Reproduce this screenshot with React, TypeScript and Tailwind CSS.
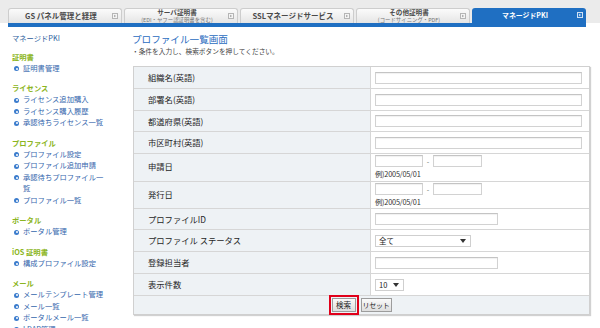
import React from "react";

const FONT = "font-['Noto_Sans_CJK_JP','Noto_Sans',sans-serif]";

type Tab = { l1: string; l2?: string; active?: boolean };
const tabs: Tab[] = [
  { l1: "GS パネル管理と経理" },
  { l1: "サーバ証明書", l2: "(EDI・ヤフー認証明書を含む)" },
  { l1: "SSLマネージドサービス" },
  { l1: "その他証明書", l2: "(コードサイニング・PDF)" },
  { l1: "マネージドPKI", active: true },
];

function TabIcon({ active }: { active?: boolean }) {
  return (
    <span
      className={`absolute right-[3px] top-[4px] flex h-[6px] w-[6px] items-center justify-center border ${
        active ? "border-[#cfe0f4] bg-[#2a78c8]" : "border-[#b5b5b5] bg-[#f4f4f4]"
      }`}
    >
      <svg width="4" height="4" viewBox="0 0 4 4">
        <path d="M1.2 0.8 L3 2 L1.2 3.2 Z" fill={active ? "#e6f0fb" : "#9a9a9a"} />
      </svg>
    </span>
  );
}

type Section = { title: string; items: string[] };
const sections: Section[] = [
  { title: "証明書", items: ["証明書管理"] },
  { title: "ライセンス", items: ["ライセンス追加購入", "ライセンス購入履歴", "承認待ちライセンス一覧"] },
  {
    title: "プロファイル",
    items: ["プロファイル設定", "プロファイル追加申請", "承認待ちプロファイル一覧", "プロファイル一覧"],
  },
  { title: "ポータル", items: ["ポータル管理"] },
  { title: "iOS 証明書", items: ["構成プロファイル設定"] },
  { title: "メール", items: ["メールテンプレート管理", "メール一覧", "ポータルメール一覧", "LDAP管理"] },
];

function Bullet() {
  return (
    <span className="mt-[3.5px] flex h-[5px] w-[5px] shrink-0 items-center justify-center rounded-full bg-[#3b7ccd]">
      <span className="h-[2px] w-[2px] rounded-full bg-white" />
    </span>
  );
}

function TextBox({ w }: { w: string }) {
  return (
    <div
      className={`${w} h-[12px] border border-[#d2d2d2] border-t-[#c4c4c4] bg-white shadow-[inset_0_1px_1px_rgba(0,0,0,0.06)]`}
    />
  );
}

function SelectBox({ w, value }: { w: string; value: string }) {
  return (
    <div
      className={`${w} flex h-[12px] items-center justify-between border border-[#cfcfcf] bg-white pl-[3px] pr-[4px] text-[7.5px] leading-none text-[#222]`}
    >
      <span>{value}</span>
      <svg width="6" height="4" viewBox="0 0 6 4">
        <path d="M0 0 L6 0 L3 4 Z" fill="#333" />
      </svg>
    </div>
  );
}

function Row({
  label,
  h,
  children,
  labelTop,
}: {
  label: string;
  h: string;
  children: React.ReactNode;
  labelTop?: boolean;
}) {
  return (
    <div className={`flex ${h} border-b border-[#d6d6d6]`}>
      <div
        className={`flex w-[237px] shrink-0 border-r border-[#d6d6d6] bg-[#eef2f5] pl-[14px] text-[8.3px] text-[#1e1e1e] ${
          labelTop ? "items-start pt-[6px]" : "items-center"
        }`}
      >
        {label}
      </div>
      <div className={`flex flex-1 flex-col bg-white pl-[4px] ${labelTop ? "justify-start pt-[1px]" : "justify-center"}`}>
        {children}
      </div>
    </div>
  );
}

function DateRange() {
  return (
    <div className="flex flex-col">
      <div className="flex items-center">
        <TextBox w="w-[48px]" />
        <span className="w-[10px] text-center text-[7px] leading-none text-[#666]">-</span>
        <TextBox w="w-[49px]" />
      </div>
      <div className="mt-[2px] text-[7.3px] leading-[10px] tracking-[-0.2px] text-[#333]">例)2005/05/01</div>
    </div>
  );
}

export default function App() {
  return (
    <div className={`h-[328px] w-[600px] overflow-hidden bg-white ${FONT}`}>
      {/* header tabs */}
      <div className="h-[23px] bg-[#ebebeb] pt-[8px]">
        <div className="flex gap-[2px] pl-[8px]">
          {tabs.map((t) =>
            t.active ? (
              <div
                key={t.l1}
                className="relative flex h-[15px] w-[114px] items-center justify-center rounded-t-[3px] bg-[#1f6fc2] pr-[8px] text-[6.9px] font-bold text-white"
              >
                {t.l1}
                <TabIcon active />
              </div>
            ) : (
              <div
                key={t.l1}
                className="relative flex h-[15px] w-[114px] flex-col items-center justify-center overflow-hidden rounded-t-[3px] border border-b-0 border-[#cdcdcd] bg-gradient-to-b from-[#fbfbfb] to-[#e5e5e5] pr-[8px] font-bold leading-none text-[#4a4a4a]"
              >
                {t.l2 ? (
                  <>
                    <span className="block h-[7.5px] whitespace-nowrap text-[6.6px] leading-[7.5px]">{t.l1}</span>
                    <span className="block h-[6.5px] whitespace-nowrap text-[5.4px] font-normal leading-[6.5px] text-[#777]">
                      {t.l2}
                    </span>
                  </>
                ) : (
                  <span className="whitespace-nowrap text-[7.5px]">{t.l1}</span>
                )}
                <TabIcon />
              </div>
            )
          )}
        </div>
      </div>
      <div className="ml-[8px] h-[4px] w-[578px] bg-[#1f6fc2]" />

      <div className="flex">
        {/* sidebar */}
        <div className="w-[125px] shrink-0 pl-[12px] pt-[6px] text-[7.3px]">
          <div className="leading-[11.5px] text-[#2d5d9c]">マネージドPKI</div>
          {sections.map((s, i) => (
            <div key={s.title} className={i === 0 ? "mt-[6px]" : "mt-[8px]"}>
              <div className="font-bold leading-[12px] text-[#8bb521]">{s.title}</div>
              {s.items.map((it) => (
                <div key={it} className="flex gap-[4px] pl-[2px] leading-[11.5px] text-[#3567ad]">
                  <Bullet />
                  <span className="w-[83px]">{it}</span>
                </div>
              ))}
            </div>
          ))}
        </div>

        {/* main */}
        <div className="flex-1 pl-[7px] pt-[6px]">
          <div className="text-[9.6px] leading-[12px] text-[#2a6cc0]">プロファイル一覧画面</div>
          <div className="mt-[1px] text-[6.7px] leading-[10px] text-[#444]">・条件を入力し、検索ボタンを押してください。</div>

          <div className="ml-[1px] mt-[10px] w-[457px] border border-b-0 border-[#d0d0d0] shadow-[1px_1px_1px_rgba(0,0,0,0.18)]">
            <Row label="組織名(英語)" h="h-[22px]">
              <TextBox w="w-[207px]" />
            </Row>
            <Row label="部署名(英語)" h="h-[22px]">
              <TextBox w="w-[207px]" />
            </Row>
            <Row label="都道府県(英語)" h="h-[21px]">
              <TextBox w="w-[207px]" />
            </Row>
            <Row label="市区町村(英語)" h="h-[22px]">
              <TextBox w="w-[207px]" />
            </Row>
            <Row label="申請日" h="h-[28px]" labelTop>
              <DateRange />
            </Row>
            <Row label="発行日" h="h-[27px]" labelTop>
              <DateRange />
            </Row>
            <Row label="プロファイルID" h="h-[21px]">
              <TextBox w="w-[123px]" />
            </Row>
            <Row label="プロファイル ステータス" h="h-[22px]">
              <SelectBox w="w-[96px]" value="全て" />
            </Row>
            <Row label="登録担当者" h="h-[22px]">
              <TextBox w="w-[123px]" />
            </Row>
            <Row label="表示件数" h="h-[22px]">
              <SelectBox w="w-[29px]" value="10" />
            </Row>
            <div className="flex h-[19px] items-center justify-center gap-[2px] border-b border-[#cfcfcf] bg-[#eef2f5] pr-[3px]">
              <div className="border-2 border-[#e0001a] p-[1px]">
                <button className="flex h-[14px] w-[24px] items-center justify-center whitespace-nowrap border border-[#9c9c9c] bg-gradient-to-b from-[#fafafa] to-[#dedede] text-[7.5px] leading-none text-[#222]">
                  検索
                </button>
              </div>
              <button className="flex h-[14px] w-[31px] items-center justify-center whitespace-nowrap border border-[#9c9c9c] bg-gradient-to-b from-[#fafafa] to-[#dedede] text-[7px] leading-none tracking-[-0.3px] text-[#222]">
                リセット
              </button>
            </div>
          </div>
        </div>
      </div>
    </div>
  );
}
